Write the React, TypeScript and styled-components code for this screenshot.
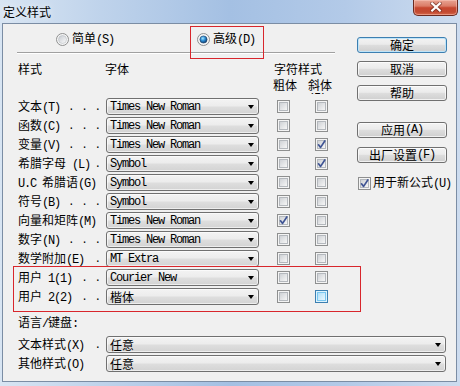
import React from "react";
import styled, { createGlobalStyle } from "styled-components";

const GlobalStyle = createGlobalStyle`
  html, body { margin: 0; padding: 0; }
  body {
    width: 460px;
    height: 386px;
    overflow: hidden;
    font-family: "Noto Sans CJK SC", "Liberation Sans", sans-serif;
    color: #000;
  }
`;

const CJK = `"Noto Sans CJK SC", "Liberation Sans", sans-serif`;

const Window = styled.div`
  width: 460px;
  height: 386px;
  box-sizing: border-box;
  display: flex;
  flex-direction: column;
  background: linear-gradient(90deg, #d8e5f3 0%, #bfd3eb 22%, #a4c0e3 50%, #b3cae8 75%, #cddcef 100%);
`;

const TitleBar = styled.div`
  height: 23px;
  display: flex;
  align-items: center;
  padding-left: 3px;
`;

const TitleText = styled.span`
  font: 12px/12px ${CJK};
  color: #000;
  text-shadow: 0 0 6px rgba(255, 255, 255, 0.9);
`;

const CloseButton = styled.div`
  align-self: flex-start;
  margin: 0 2px 0 auto;
  width: 45px;
  height: 16px;
  box-sizing: border-box;
  border: 1px solid #6b2a20;
  border-top: none;
  border-radius: 0 0 5px 5px;
  background: linear-gradient(#e8a392 0%, #db7d68 40%, #c7472f 52%, #c24a31 80%, #d8694b 100%);
  box-shadow: inset 0 0 0 1px rgba(255, 210, 200, 0.45);
  display: flex;
  justify-content: center;
  padding-top: 2px;
`;

const ClientArea = styled.div`
  flex: 1;
  margin: 0 3px 4px 2px;
  border: 1px solid #7b8da4;
  background: #f0f0f0;
  padding-left: 15px;
  display: flex;
  flex-direction: column;
`;

const TopSection = styled.div`
  display: flex;
`;

const LeftPane = styled.div`
  width: 339px;
  display: flex;
  flex-direction: column;
`;

const RadioRow = styled.div`
  height: 28px;
  box-sizing: border-box;
  padding: 2px 0 0 38px;
  display: grid;
  grid-template-columns: 141px auto;
  align-items: center;
`;

const RadioItem = styled.div<{ $marked?: boolean }>`
  position: relative;
  display: flex;
  align-items: center;
  gap: 3px;
  font: 12px/13px ${CJK};
  &::after {
    content: "";
    display: ${(p) => (p.$marked ? "block" : "none")};
    position: absolute;
    left: -7px;
    top: -5px;
    width: 74px;
    height: 33px;
    box-sizing: border-box;
    border: 1px solid #d8262c;
    pointer-events: none;
  }
`;

const Separator = styled.div`
  margin-left: -1px;
  width: 318px;
  border-top: 1px solid #a0a0a0;
  border-bottom: 1px solid #ffffff;
`;

const Header = styled.div`
  height: 40px;
  overflow: hidden;
  box-sizing: border-box;
  padding-top: 9px;
  display: flex;
  font: 12px/12px ${CJK};
`;

const HeaderCell = styled.div<{ $w: number }>`
  width: ${(p) => p.$w}px;
  flex: none;
`;

const CharStyleHead = styled.div`
  display: flex;
  flex-direction: column;
`;

const CharStyleTitle = styled.div`
  padding-left: 1px;
`;

const CharStyleSub = styled.div`
  margin-top: 4px;
  display: flex;
`;

const Rows = styled.div`
  margin-top: 4px;
  display: flex;
  flex-direction: column;
  gap: 2px;
`;

const UserGroup = styled.div`
  position: relative;
  display: flex;
  flex-direction: column;
  gap: 2px;
  &::after {
    content: "";
    position: absolute;
    left: -5px;
    top: -3px;
    width: 348px;
    bottom: -7px;
    box-sizing: border-box;
    border: 1px solid #d8262c;
    pointer-events: none;
  }
`;

const Row = styled.div`
  height: 17px;
  display: grid;
  grid-template-columns: 88px 153px 31px 38px;
  align-items: center;
`;

const WideRow = styled.div`
  height: 17px;
  display: grid;
  grid-template-columns: 88px 340px;
  align-items: center;
`;

const Label = styled.div`
  display: flex;
  align-items: center;
  justify-content: space-between;
  padding-right: 5px;
  font: 12px/12px ${CJK};
  white-space: nowrap;
`;

const Ascii = styled.span`
  font-family: "Liberation Mono", monospace;
  font-size: 12px;
  letter-spacing: -1.2px;
  white-space: pre;
`;

const Dots = styled.span`
  font-family: "Liberation Mono", monospace;
  font-size: 11px;
  white-space: pre;
`;

const Combo = styled.div`
  height: 17px;
  box-sizing: border-box;
  border: 1px solid #707070;
  border-radius: 3px;
  background: linear-gradient(#f3f3f3 0%, #ececec 48%, #dedede 52%, #d3d3d3 100%);
  box-shadow: inset 0 0 0 1px rgba(255, 255, 255, 0.6);
  display: flex;
  align-items: center;
  padding: 0 4px 0 3px;
`;

const ComboText = styled.span<{ $cjk?: boolean }>`
  flex: 1;
  white-space: pre;
  font-family: ${(p) => (p.$cjk ? CJK : `"Liberation Mono", monospace`)};
  font-size: 12px;
  letter-spacing: ${(p) => (p.$cjk ? 0 : -1.2)}px;
  line-height: 12px;
  color: #000;
`;

const Arrow = styled.span`
  width: 0;
  height: 0;
  border-left: 3.5px solid transparent;
  border-right: 3.5px solid transparent;
  border-top: 4px solid #000;
`;

const BoxCell = styled.div`
  justify-self: end;
  display: flex;
`;

const Box = styled.span<{ $hover?: boolean }>`
  width: 13px;
  height: 13px;
  box-sizing: border-box;
  border: 1px solid ${(p) => (p.$hover ? "#3c7fb1" : "#8e8f8f")};
  background: ${(p) => (p.$hover ? "#def3fc" : "#f4f4f4")};
  padding: 1px;
  display: grid;
  & > * {
    grid-area: 1 / 1;
  }
`;

const BoxInner = styled.span<{ $hover?: boolean }>`
  box-sizing: border-box;
  width: 9px;
  height: 9px;
  border: 1px solid ${(p) => (p.$hover ? "#79c6f0" : "#b4b8bd")};
  background: ${(p) =>
    p.$hover
      ? "linear-gradient(135deg, #b1dff8 0%, #e9f7fe 100%)"
      : "linear-gradient(135deg, #cfd2d6 0%, #f6f6f6 100%)"};
`;

const CheckSvg = styled.svg`
  margin: -1px 0 0 -1px;
  overflow: visible;
`;

const RightPane = styled.div`
  width: 90px;
  padding-top: 13px;
  display: flex;
  flex-direction: column;
`;

const ButtonGroup = styled.div<{ $gap: number; $top?: number }>`
  display: flex;
  flex-direction: column;
  gap: ${(p) => p.$gap}px;
  margin-top: ${(p) => p.$top ?? 0}px;
`;

const Button = styled.div<{ $default?: boolean }>`
  height: 16px;
  box-sizing: border-box;
  border: 1px solid ${(p) => (p.$default ? "#3c7fb1" : "#707070")};
  border-radius: 3px;
  background: linear-gradient(#f3f3f3 0%, #ebebeb 45%, #dddddd 52%, #cfcfcf 100%);
  box-shadow: inset 0 0 0 1px ${(p) => (p.$default ? "#bfe4f8" : "rgba(255,255,255,0.7)")};
  display: flex;
  align-items: center;
  justify-content: center;
  font: 12px/12px ${CJK};
  white-space: nowrap;
`;

const CheckOption = styled.div`
  margin: 12px 0 0 1px;
  display: flex;
  align-items: center;
  gap: 2px;
  font: 12px/13px ${CJK};
  white-space: nowrap;
`;

const BottomSection = styled.div`
  margin-top: 11px;
  display: flex;
  flex-direction: column;
`;

const SectionTitle = styled.div`
  font: 12px/12px ${CJK};
  margin-bottom: 6px;
`;

const BottomRows = styled.div`
  display: flex;
  flex-direction: column;
  gap: 2px;
`;

type BoxState = "off" | "on" | "hover";

const Mixed = ({ text }: { text: string }) => (
  <>
    {text
      .split(/([\x20-\x7e]+)/)
      .filter(Boolean)
      .map((part, i) =>
        /^[\x20-\x7e]+$/.test(part) ? (
          <Ascii key={i}>{part}</Ascii>
        ) : (
          <React.Fragment key={i}>{part}</React.Fragment>
        )
      )}
  </>
);

const CheckBox = ({ state }: { state: BoxState }) => (
  <Box $hover={state === "hover"}>
    <BoxInner $hover={state === "hover"} />
    {state === "on" && (
      <CheckSvg width="11" height="11" viewBox="0 0 11 11">
        <path d="M2.5 5.8 L4.6 8.4 L8.8 2" fill="none" stroke="#3f5494" strokeWidth="1.7" strokeLinecap="round" strokeLinejoin="round" />
      </CheckSvg>
    )}
  </Box>
);

const RadioIcon = ({ on }: { on?: boolean }) => (
  <svg width="13" height="13" viewBox="0 0 13 13">
    <defs>
      <linearGradient id="radOff" x1="0" y1="0" x2="1" y2="1">
        <stop offset="0" stopColor="#c6cad0" />
        <stop offset="1" stopColor="#fbfbfb" />
      </linearGradient>
      <radialGradient id="radOn" cx="0.4" cy="0.35" r="0.7">
        <stop offset="0" stopColor="#a6e6ff" />
        <stop offset="0.45" stopColor="#2f8fd6" />
        <stop offset="1" stopColor="#0c3466" />
      </radialGradient>
    </defs>
    <circle cx="6.5" cy="6.5" r="6" fill="#f5f5f5" stroke="#8e8f8f" strokeWidth="1" />
    {on ? (
      <circle cx="6.5" cy="6.5" r="3.6" fill="url(#radOn)" stroke="#1d3f66" strokeWidth="0.6" />
    ) : (
      <circle cx="6.5" cy="6.5" r="4" fill="url(#radOff)" stroke="#b9bdc3" strokeWidth="0.6" />
    )}
  </svg>
);

const CloseIcon = () => (
  <svg width="12" height="10" viewBox="0 0 12 10">
    <path d="M2.2 1.5 L9.8 8.5 M9.8 1.5 L2.2 8.5" stroke="#5a2018" strokeOpacity="0.55" strokeWidth="4" strokeLinecap="square" />
    <path d="M2.2 1.5 L9.8 8.5 M9.8 1.5 L2.2 8.5" stroke="#ffffff" strokeWidth="2.2" strokeLinecap="square" />
  </svg>
);

type RowData = { label: string; dots: number; font: string; bold: BoxState; italic: BoxState; cjk?: boolean };

const rows: RowData[] = [
  { label: "文本(T)", dots: 3, font: "Times New Roman", bold: "off", italic: "off" },
  { label: "函数(C)", dots: 3, font: "Times New Roman", bold: "off", italic: "off" },
  { label: "变量(V)", dots: 3, font: "Times New Roman", bold: "off", italic: "on" },
  { label: "希腊字母 (L)", dots: 1, font: "Symbol", bold: "off", italic: "on" },
  { label: "U.C 希腊语(G)", dots: 0, font: "Symbol", bold: "off", italic: "off" },
  { label: "符号(B)", dots: 3, font: "Symbol", bold: "off", italic: "off" },
  { label: "向量和矩阵(M)", dots: 0, font: "Times New Roman", bold: "on", italic: "off" },
  { label: "数字(N)", dots: 3, font: "Times New Roman", bold: "off", italic: "off" },
  { label: "数学附加(E)", dots: 1, font: "MT Extra", bold: "off", italic: "off" },
];

const userRows: RowData[] = [
  { label: "用户 1(1)", dots: 2, font: "Courier New", bold: "off", italic: "off" },
  { label: "用户 2(2)", dots: 2, font: "楷体", bold: "off", italic: "hover", cjk: true },
];

const DOTS = ["", ".", ". .", ". . ."];

const StyleRow = ({ r }: { r: RowData }) => (
  <Row>
    <Label>
      <span>
        <Mixed text={r.label} />
      </span>
      {r.dots > 0 && <Dots>{DOTS[r.dots]}</Dots>}
    </Label>
    <Combo>
      <ComboText $cjk={r.cjk}>{r.font}</ComboText>
      <Arrow />
    </Combo>
    <BoxCell>
      <CheckBox state={r.bold} />
    </BoxCell>
    <BoxCell>
      <CheckBox state={r.italic} />
    </BoxCell>
  </Row>
);

export default function App() {
  return (
    <>
      <GlobalStyle />
      <Window>
        <TitleBar>
          <TitleText>定义样式</TitleText>
          <CloseButton>
            <CloseIcon />
          </CloseButton>
        </TitleBar>
        <ClientArea>
          <TopSection>
            <LeftPane>
              <RadioRow>
                <RadioItem>
                  <RadioIcon />
                  <span>
                    <Mixed text="简单(S)" />
                  </span>
                </RadioItem>
                <RadioItem $marked>
                  <RadioIcon on />
                  <span>
                    <Mixed text="高级(D)" />
                  </span>
                </RadioItem>
              </RadioRow>
              <Separator />
              <Header>
                <HeaderCell $w={87}>样式</HeaderCell>
                <HeaderCell $w={168}>字体</HeaderCell>
                <CharStyleHead>
                  <CharStyleTitle>字符样式</CharStyleTitle>
                  <CharStyleSub>
                    <HeaderCell $w={35}>粗体</HeaderCell>
                    <HeaderCell $w={30}>
                      斜体
                      <br />
                      <Mixed text="(I)" />
                    </HeaderCell>
                  </CharStyleSub>
                </CharStyleHead>
              </Header>
              <Rows>
                {rows.map((r) => (
                  <StyleRow key={r.label} r={r} />
                ))}
                <UserGroup>
                  {userRows.map((r) => (
                    <StyleRow key={r.label} r={r} />
                  ))}
                </UserGroup>
              </Rows>
            </LeftPane>
            <RightPane>
              <ButtonGroup $gap={8}>
                <Button $default>确定</Button>
                <Button>取消</Button>
                <Button>帮助</Button>
              </ButtonGroup>
              <ButtonGroup $gap={9} $top={21}>
                <Button>
                  <Mixed text="应用(A)" />
                </Button>
                <Button>
                  <Mixed text="出厂设置(F)" />
                </Button>
              </ButtonGroup>
              <CheckOption>
                <CheckBox state="on" />
                <span>
                  <Mixed text="用于新公式(U)" />
                </span>
              </CheckOption>
            </RightPane>
          </TopSection>
          <BottomSection>
            <SectionTitle>
              <Mixed text="语言/键盘:" />
            </SectionTitle>
            <BottomRows>
              <WideRow>
                <Label>
                  <span>
                    <Mixed text="文本样式(X)" />
                  </span>
                  <Dots>.</Dots>
                </Label>
                <Combo>
                  <ComboText $cjk>任意</ComboText>
                  <Arrow />
                </Combo>
              </WideRow>
              <WideRow>
                <Label>
                  <span>
                    <Mixed text="其他样式(O)" />
                  </span>
                </Label>
                <Combo>
                  <ComboText $cjk>任意</ComboText>
                  <Arrow />
                </Combo>
              </WideRow>
            </BottomRows>
          </BottomSection>
        </ClientArea>
      </Window>
    </>
  );
}
